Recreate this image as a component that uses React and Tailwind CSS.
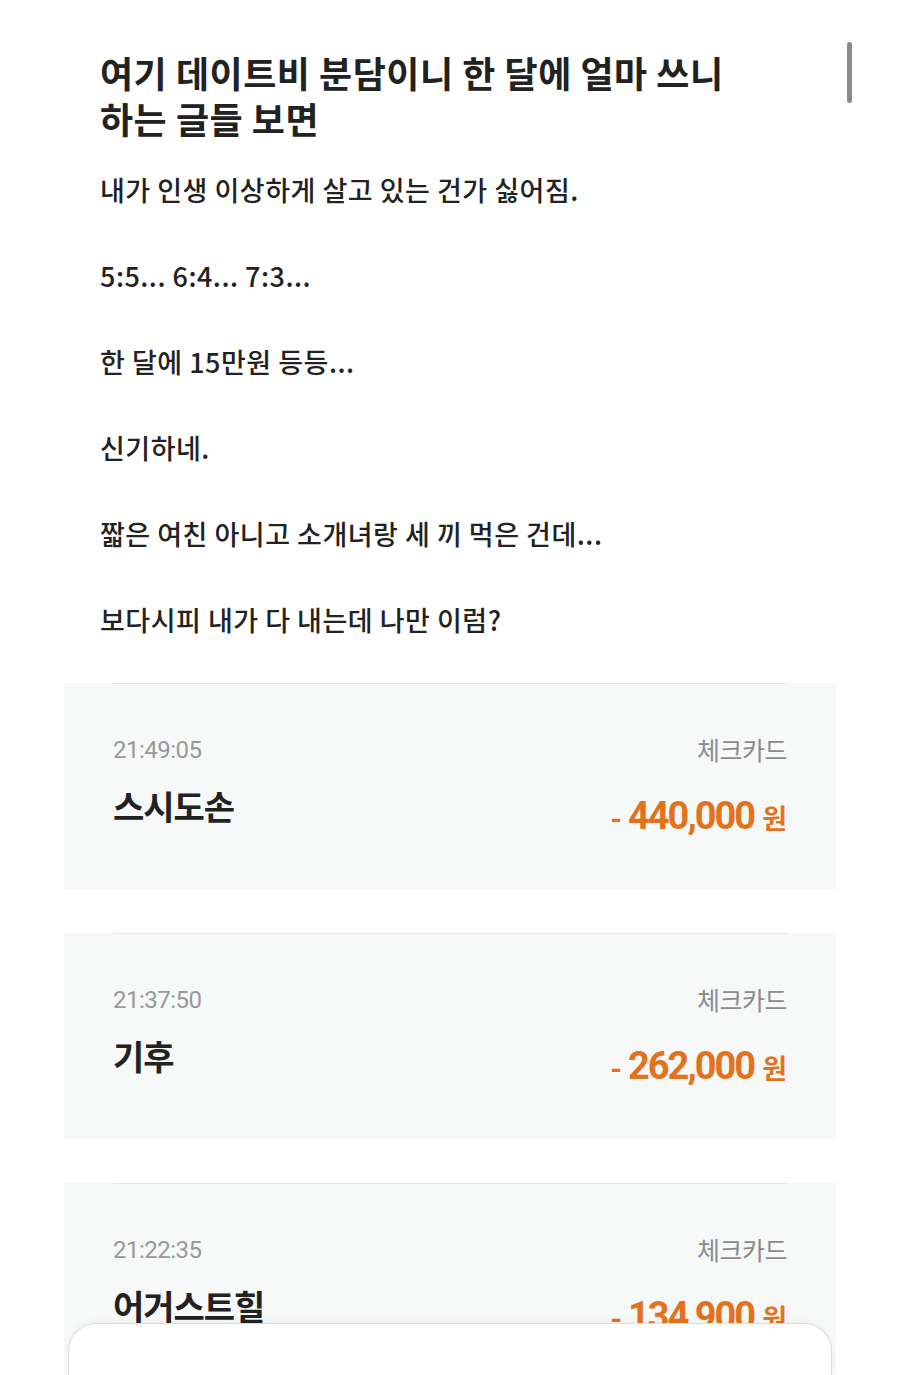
const kr = { fontFamily: '"Noto Sans CJK KR", "Noto Sans", sans-serif' };
const num = { fontFamily: 'Roboto, "Noto Sans CJK KR", sans-serif' };

const lines = [
  "내가 인생 이상하게 살고 있는 건가 싫어짐.",
  "5:5... 6:4... 7:3...",
  "한 달에 15만원 등등...",
  "신기하네.",
  "짧은 여친 아니고 소개녀랑 세 끼 먹은 건데...",
  "보다시피 내가 다 내는데 나만 이럼?",
];

const payments = [
  { time: "21:49:05", name: "스시도손", amount: "440,000" },
  { time: "21:37:50", name: "기후", amount: "262,000" },
  { time: "21:22:35", name: "어거스트힐", amount: "134,900" },
];

function PaymentCard({ time, name, amount }) {
  return (
    <div className="bg-[#f7f8f8] h-[206px] px-[49px]">
      <div className="border-t border-[#e4e5e6] pt-[50px]">
        <div className="flex justify-between items-center h-[32px]">
          <span style={num} className="text-[24px] text-[#999] tracking-[-0.5px]">{time}</span>
          <span style={kr} className="text-[25px] text-[#8c8c8c] tracking-[-0.5px]">체크카드</span>
        </div>
        <div className="flex justify-between items-start">
          <span style={kr} className="mt-[20px] text-[34px] leading-[40px] font-bold text-[#222] tracking-[-1px]">
            {name}
          </span>
          <span className="mt-[28px] leading-[44px] text-[#e3721c] flex items-baseline">
            <span style={num} className="text-[30px] font-bold mr-[6px]">-</span>
            <span style={num} className="text-[38px] font-bold tracking-[-2px]">{amount}</span>
            <span style={kr} className="text-[27px] font-bold ml-[8px]">원</span>
          </span>
        </div>
      </div>
    </div>
  );
}

export default function App() {
  return (
    <div className="relative h-[1375px] overflow-hidden bg-white">
      <div className="absolute left-[847px] top-[42px] w-[5px] h-[61px] rounded-full bg-[#8a8a8a]" />

      <div className="pl-[100px] pr-[120px] pt-[49px]">
        <h1 style={kr} className="text-[36px] leading-[46px] font-bold text-[#222] tracking-[0.5px]">
          <span className="block">여기 데이트비 분담이니 한 달에 얼마 쓰니</span>
          <span className="block">하는 글들 보면</span>
        </h1>
        <div style={kr} className="mt-[27px] text-[27px] leading-[43px] font-medium text-[#222] tracking-[0.5px] flex flex-col gap-[43px]">
          {lines.map((l) => (
            <p key={l}>{l}</p>
          ))}
        </div>
      </div>

      <div className="mt-[42px] mx-[64px] flex flex-col gap-[44px]">
        {payments.map((p) => (
          <PaymentCard key={p.time} {...p} />
        ))}
      </div>

      <div className="absolute left-[68px] right-[68px] top-[1323px] bottom-0 bg-white rounded-t-[28px] border-t border-x border-[#dcdcdc] shadow-[0_-2px_6px_rgba(0,0,0,0.04)]" />
    </div>
  );
}
